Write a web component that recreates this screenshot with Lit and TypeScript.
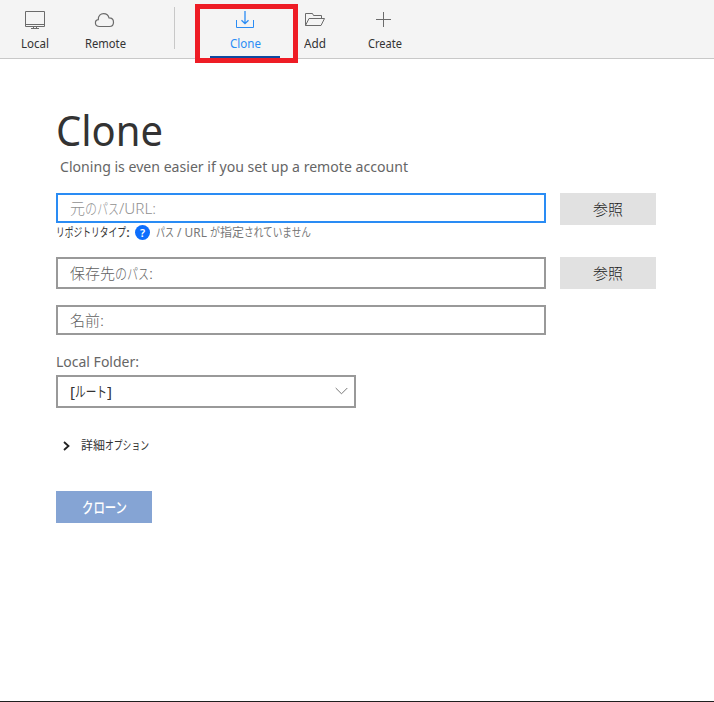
import { LitElement, html, css, svg } from "lit";
import { customElement, property } from "lit/decorators.js";

/* One run of text, condensed or widened to a given advance width. */
@customElement("fit-text")
class FitText extends LitElement {
  @property({ type: Number }) w = 0;
  static styles = css`
    :host { display: inline-block; white-space: pre; }
    .run { display: inline-block; transform-origin: 0 50%; white-space: pre; }
  `;
  render() {
    return html`<span class="run"><slot></slot></span>`;
  }
  firstUpdated() {
    const run = this.renderRoot.querySelector(".run") as HTMLElement;
    const natural = run.getBoundingClientRect().width;
    this.style.width = `${this.w}px`;
    run.style.transform = `scaleX(${this.w / natural})`;
  }
}

const icons = {
  local: svg`<path d="M25.5 11.5h19v15h-19zM25.5 24.5h19M33.5 27v1.5M36.5 27v1.5M31 28.5h8"/>`,
  remote: svg`<path stroke-width="1.2" d="M29.500 26.500C24.300 26.500 24.300 20.200 28.300 19.700C28 15.700 30.800 13.600 33.500 13.600C36.400 13.600 38.500 15.400 39 17.900C42 17.900 43.500 19.900 43.500 22.200C43.500 24.800 42 26.500 39.500 26.500Z"/>`,
  clone: svg`<path d="M26.500 20v7.500h17V20"/><path stroke-width="1.3" d="M35 11v12.500M31.500 20.200L35 23.700l3.500-3.500"/>`,
  add: svg`<path d="M25.500 25.500v-12h7l1 2h8v3M25.500 25.500l3.500-7h15.500l-3.500 7z"/>`,
  create: svg`<path d="M33.500 12v15M26 19.500h15"/>`,
};

@customElement("app-root")
class AppRoot extends LitElement {
  static styles = css`
    * { box-sizing: border-box; }
    :host {
      display: flex; flex-direction: column; height: 702px; box-sizing: border-box; background: #fff;
      border-bottom: 1px solid #1f1f1f; color: #333; overflow: hidden;
      font-family: "Noto Sans", "Noto Sans CJK JP", sans-serif;
    }
    .bar { display: flex; height: 59px; flex: none; background: #f4f4f4; border-bottom: 1px solid #c8c8c8; }
    .tab { width: 70px; height: 58px; display: flex; flex-direction: column; align-items: center; font-size: 12px; line-height: 16px; position: relative; }
    .tab svg { width: 70px; height: 36px; flex: none; fill: none; stroke: #6b6b6b; stroke-width: 1; }
    .tab.active { color: #2a8cf4; border-bottom: 2px solid #0f4aa0; }
    .tab.active svg { stroke: #2a8cf4; }
    .mark { position: absolute; left: -15px; top: 4px; width: 103px; height: 59px; border: 5px solid #ee1c25; z-index: 1; }
    .sep { width: 1px; height: 42px; margin: 7px 35px 0 34px; background: #c8c8c8; }
    main { display: flex; flex-direction: column; align-items: flex-start; padding: 46px 0 0 56px; }
    h1 { margin: 0; font-weight: 400; font-size: 41px; line-height: 50px; height: 50px; }
    .hint { margin: 2px 0 0 4px; height: 20px; font-size: 14px; line-height: 20px; color: #666; }
    .row { display: flex; gap: 14px; height: 32px; }
    .first { margin-top: 16px; }
    .box { display: flex; align-items: center; width: 490px; height: 32px; padding: 0 0 1px 12px; border: 2px solid #999; font-size: 14.5px; line-height: 20px; font-weight: 300; color: #606060; }
    .box.short { height: 30px; padding-bottom: 0; }
    .box.focus { border-color: #2a8cf4; color: #909090; }
    .btn { display: flex; align-items: center; justify-content: center; width: 96px; height: 32px; background: #e1e1e1; font-size: 15px; line-height: 20px; font-weight: 300; color: #222; }
    .status { display: flex; align-items: center; height: 16px; font-size: 12px; line-height: 16px; }
    .help { width: 15px; height: 15px; margin: -1px 6px 0 5px; border-radius: 50%; background: #0d6efd; color: #fff; font-weight: 600; font-size: 11px; line-height: 15px; text-align: center; }
    .muted { color: #777; display: flex; }
    .dest { margin-top: 16px; }
    .name { margin-top: 16px; }
    .label { margin-top: 17px; height: 20px; font-size: 14px; line-height: 20px; color: #666; }
    .select { justify-content: space-between; margin-top: 3px; width: 300px; height: 33px; padding: 0 6px 2px 12px; font-weight: 400; color: #333; }
    .select svg { width: 13px; height: 8px; fill: none; stroke: #777; }
    .more { display: flex; align-items: center; margin: 29px 0 0 7px; height: 18px; font-size: 12px; line-height: 18px; color: #333; }
    .more svg { width: 7px; height: 10px; margin-right: 11px; fill: none; stroke: #222; stroke-width: 1.8; }
    .go { margin-top: 36px; background: #85a4d4; color: #fff; font-weight: 500; }
  `;

  tab(icon: unknown, label: string, w: number, active = false) {
    return html`<div class="tab ${active ? "active" : ""}">
      <svg viewBox="0 0 70 36">${icon}</svg><fit-text w=${w}>${label}</fit-text>
      ${active ? html`<div class="mark"></div>` : ""}
    </div>`;
  }

  render() {
    return html`
      <div class="bar">
        ${this.tab(icons.local, "Local", 28)}${this.tab(icons.remote, "Remote", 41)}
        <div class="sep"></div>
        ${this.tab(icons.clone, "Clone", 31, true)}${this.tab(icons.add, "Add", 22)}${this.tab(icons.create, "Create", 34)}
      </div>
      <main>
        <h1><fit-text w="107">Clone</fit-text></h1>
        <div class="hint"><fit-text w="348">Cloning is even easier if you set up a remote account</fit-text></div>
        <div class="row first">
          <div class="box short focus"><fit-text w="15">元</fit-text><fit-text w="12">の</fit-text><fit-text w="22">パス</fit-text><fit-text w="37">/URL:</fit-text></div>
          <div class="btn">参照</div>
        </div>
        <div class="status">
          <fit-text w="70">リポジトリタイプ</fit-text><fit-text w="4">:</fit-text>
          <span class="help">?</span>
          <span class="muted"><fit-text w="18">パス</fit-text><fit-text w="36"> / URL </fit-text><fit-text w="10">が</fit-text><fit-text w="24">指定</fit-text><fit-text w="67">されていません</fit-text></span>
        </div>
        <div class="row dest">
          <div class="box"><fit-text w="45">保存先</fit-text><fit-text w="12">の</fit-text><fit-text w="22">パス</fit-text><fit-text w="4">:</fit-text></div>
          <div class="btn">参照</div>
        </div>
        <div class="box short name"><fit-text w="30">名前</fit-text><fit-text w="4">:</fit-text></div>
        <div class="label"><fit-text w="83">Local Folder:</fit-text></div>
        <div class="box select">
          <span><fit-text w="5">[</fit-text><fit-text w="32">ルート</fit-text><fit-text w="5">]</fit-text></span>
          <svg viewBox="0 0 13 8"><path d="M.7 1L6.5 6.8L12.3 1"/></svg>
        </div>
        <div class="more">
          <svg viewBox="0 0 7 10"><path d="M1 1l4.500 4L1 9"/></svg>
          <fit-text w="24">詳細</fit-text><fit-text w="44">オプション</fit-text>
        </div>
        <div class="btn go"><fit-text w="45">クローン</fit-text></div>
      </main>
    `;
  }
}
